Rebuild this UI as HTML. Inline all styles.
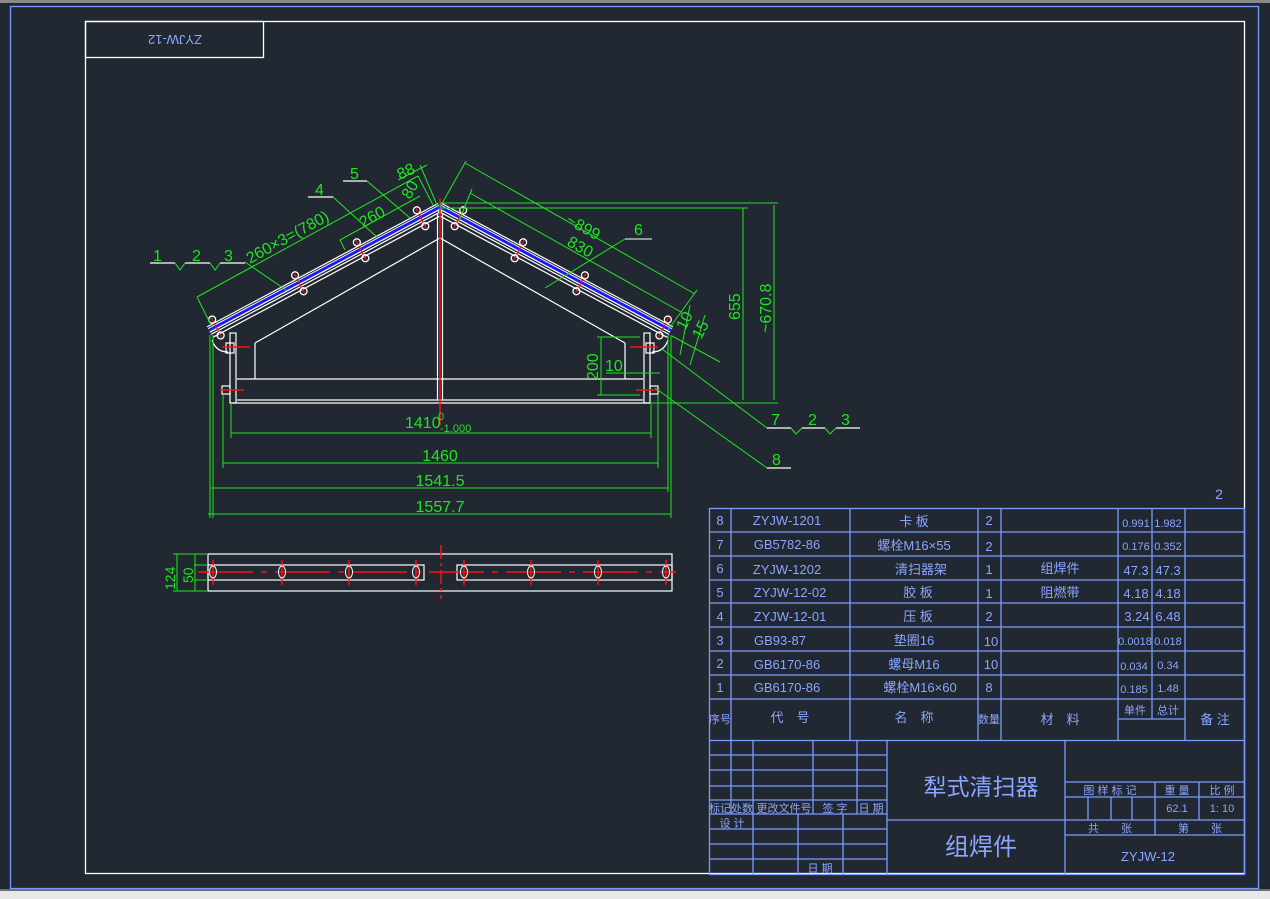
<!DOCTYPE html>
<html><head><meta charset="utf-8"><style>
html,body{margin:0;padding:0;background:#222831;width:1270px;height:899px;overflow:hidden}
svg{display:block}
text{font-family:"Liberation Sans","Noto Sans CJK SC",sans-serif}
.g{stroke:#1ee61e;fill:none;stroke-width:1}
.gt{fill:#1ee61e;font-size:16px}
.w{stroke:#fff;fill:none;stroke-width:1.2}
.r{stroke:#ff1010;stroke-width:1.5}
.b{stroke:#7b9bff;fill:none;stroke-width:1.3}
.bt{fill:#8aa6ff;font-size:13px;text-anchor:middle}
.bc{fill:#8aa6ff;font-size:13px;text-anchor:middle}
</style></head><body>
<svg width="1270" height="899" viewBox="0 0 1270 899" xmlns="http://www.w3.org/2000/svg">
<rect x="0" y="0" width="1270" height="3" fill="#8a8a8a"/>
<rect x="0" y="891" width="1270" height="8" fill="#e8e8e8"/>
<rect x="0" y="889" width="1270" height="2" fill="#6b6f76"/>
<rect x="10.5" y="6.5" width="1248" height="882" fill="none" stroke="#7b9bff" stroke-width="1.3"/>
<rect x="85.5" y="21.5" width="1159" height="852" fill="none" stroke="#fff" stroke-width="1.3"/>
<rect x="85.5" y="21.5" width="178" height="36" fill="none" stroke="#fff" stroke-width="1.3"/>
<text x="175" y="45" class="bc" transform="rotate(180 175 40)" style="font-size:13px">ZYJW-12</text>

<!-- left roof -->
<g id="roof" transform="translate(440,207) rotate(151.9)">
<line x1="0" y1="4" x2="262" y2="4" class="w"/>
<line x1="0" y1="1.8" x2="262" y2="1.8" class="w" stroke-width="0.8"/>
<line x1="0" y1="0" x2="262" y2="0" stroke="#1a1aff" stroke-width="3"/>
<line x1="0" y1="-2" x2="262" y2="-2" class="w" stroke-width="0.8"/>
<line x1="0" y1="-4.5" x2="262" y2="-4.5" class="w"/>
<line x1="4" y1="-8" x2="262" y2="-8" class="w"/>
<g stroke="#ff1010" stroke-width="1.2">
<line x1="22" y1="10" x2="22" y2="-12"/><line x1="90" y1="10" x2="90" y2="-12"/>
<line x1="160" y1="10" x2="160" y2="-12"/><line x1="254" y1="10" x2="254" y2="-12"/>
</g>
<g fill="none" stroke="#fff" stroke-width="1.3">
<circle cx="22" cy="8" r="3.5"/><circle cx="22" cy="-10" r="3.5"/>
<circle cx="90" cy="8" r="3.5"/><circle cx="90" cy="-10" r="3.5"/>
<circle cx="160" cy="8" r="3.5"/><circle cx="160" cy="-10" r="3.5"/>
<circle cx="254" cy="8" r="3.5"/><circle cx="254" cy="-10" r="3.5"/>
</g>
</g>
<use href="#roof" transform="translate(880,0) scale(-1,1)"/>

<!-- frame -->
<g class="w">
<polyline points="255,343 440,238 625,343"/>
<line x1="437.5" y1="213" x2="437.5" y2="400"/>
<line x1="442.5" y1="213" x2="442.5" y2="400"/>
<line x1="255" y1="343" x2="255" y2="379"/><line x1="625" y1="343" x2="625" y2="379"/>
<line x1="237" y1="379" x2="643" y2="379"/>
<line x1="237" y1="400" x2="643" y2="400"/>
<line x1="230" y1="403" x2="650" y2="403"/>
<rect x="230" y="333" width="6" height="70"/>
<rect x="644" y="333" width="6" height="70"/>
<rect x="226" y="343" width="8" height="10"/><rect x="646" y="343" width="8" height="10"/>
<rect x="222" y="386" width="8" height="8"/><rect x="650" y="386" width="8" height="8"/>
<path d="M212,340 Q216,352 228,352"/><path d="M668,340 Q664,352 652,352"/>
</g>
<g class="r">
<line x1="440" y1="198" x2="440" y2="425"/>
<line x1="222" y1="347" x2="250" y2="347"/><line x1="630" y1="347" x2="658" y2="347"/>
<line x1="220" y1="390" x2="244" y2="390"/><line x1="636" y1="390" x2="660" y2="390"/>
</g>

<!-- bottom dims -->
<g class="g">
<line x1="210" y1="335" x2="210" y2="518"/><line x1="213" y1="335" x2="213" y2="518"/>
<line x1="223" y1="395" x2="223" y2="468"/><line x1="231" y1="403" x2="231" y2="438"/>
<line x1="651" y1="403" x2="651" y2="438"/><line x1="658" y1="395" x2="658" y2="468"/>
<line x1="668" y1="335" x2="668" y2="492"/><line x1="671" y1="335" x2="671" y2="518"/>
<line x1="231" y1="433" x2="651" y2="433"/>
<line x1="223" y1="463" x2="658" y2="463"/>
<line x1="210" y1="488" x2="668" y2="488"/>
<line x1="208" y1="514" x2="671" y2="514"/>
</g>
<text x="405" y="428" class="gt">1410</text><text x="438" y="420" class="gt" style="font-size:11px">0</text><text x="440" y="432" class="gt" style="font-size:11px">-1.000</text>
<text x="440" y="461" class="gt" text-anchor="middle">1460</text>
<text x="440" y="486" class="gt" text-anchor="middle">1541.5</text>
<text x="440" y="512" class="gt" text-anchor="middle">1557.7</text>

<!-- right dims -->
<g class="g">
<line x1="440" y1="203" x2="778" y2="203"/>
<line x1="440" y1="208" x2="748" y2="208"/>
<line x1="650" y1="403" x2="778" y2="403"/>
<line x1="743" y1="208" x2="743" y2="400"/>
<line x1="774" y1="205" x2="774" y2="400"/>
<line x1="597" y1="337" x2="640" y2="337"/><line x1="597" y1="395" x2="640" y2="395"/>
<line x1="601" y1="337" x2="601" y2="395"/>
<line x1="606" y1="373" x2="660" y2="373"/>
<line x1="440" y1="207" x2="466" y2="161"/>
<line x1="465" y1="163" x2="695" y2="294"/>
<line x1="668" y1="330" x2="697" y2="290"/>
<line x1="470" y1="193" x2="681" y2="312"/>
<line x1="459" y1="221" x2="472" y2="189"/>
<line x1="672" y1="336" x2="720" y2="362"/>
<line x1="690" y1="305" x2="680" y2="355"/>
<line x1="705" y1="315" x2="690" y2="365"/>
<line x1="545" y1="288" x2="625" y2="239"/><line x1="625" y1="239" x2="652" y2="239" stroke="#fff"/>
<line x1="662" y1="349" x2="767" y2="428"/>
<line x1="655" y1="388" x2="767" y2="468"/>
</g>
<text class="gt" transform="translate(740,320) rotate(-90)">655</text>
<text class="gt" transform="translate(771,333) rotate(-90)">~670.8</text>
<text class="gt" transform="translate(598,380) rotate(-90)">200</text>
<text x="605" y="371" class="gt">10</text>
<text class="gt" transform="translate(565,223) rotate(29)">~899</text>
<text class="gt" transform="translate(566,245) rotate(29)">830</text>
<text class="gt" transform="translate(685,331) rotate(-62)">10</text>
<text class="gt" transform="translate(701,340) rotate(-62)">15</text>
<text x="634" y="235" class="gt">6</text>
<g class="w"><line x1="767" y1="428" x2="791" y2="428"/><line x1="802" y1="428" x2="825" y2="428"/><line x1="836" y1="428" x2="860" y2="428"/><line x1="767" y1="468" x2="791" y2="468"/></g>
<polyline points="791,428 796,434 802,428" class="g"/><polyline points="825,428 830,434 836,428" class="g"/>
<text x="771" y="425" class="gt">7</text><text x="808" y="425" class="gt">2</text><text x="841" y="425" class="gt">3</text>
<text x="772" y="465" class="gt">8</text>

<!-- left dims -->
<g class="g">
<line x1="197" y1="297" x2="418" y2="176"/>
<line x1="197" y1="297" x2="212" y2="327"/>
<line x1="340" y1="240" x2="420" y2="196"/>
<line x1="340" y1="240" x2="345" y2="250"/>
<line x1="398" y1="180" x2="427" y2="165"/>
<line x1="418" y1="176" x2="433" y2="205"/>
<line x1="420" y1="165" x2="437" y2="205"/>
<line x1="245" y1="262" x2="286" y2="290"/>
<line x1="333" y1="197" x2="378" y2="238"/>
<line x1="367" y1="181" x2="410" y2="218"/>
</g>
<text class="gt" transform="translate(250,264) rotate(-29)">260×3=(780)</text>
<text class="gt" transform="translate(363,228) rotate(-29)">260</text>
<text class="gt" transform="translate(410,200) rotate(-60)">80</text>
<text class="gt" transform="translate(400,180) rotate(-25)">88</text>
<g class="w"><line x1="150" y1="263" x2="175" y2="263"/><line x1="185" y1="263" x2="210" y2="263"/><line x1="220" y1="263" x2="245" y2="263"/><line x1="308" y1="197" x2="333" y2="197"/><line x1="343" y1="181" x2="367" y2="181"/></g>
<polyline points="175,263 180,270 185,263" class="g"/><polyline points="210,263 215,270 220,263" class="g"/>
<text x="153" y="261" class="gt">1</text><text x="192" y="261" class="gt">2</text><text x="224" y="261" class="gt">3</text>
<text x="315" y="195" class="gt">4</text><text x="350" y="179" class="gt">5</text>

<!-- bottom view -->
<g class="w">
<rect x="208" y="554" width="464" height="37"/>
<rect x="208" y="565" width="216" height="15"/>
<rect x="457" y="565" width="215" height="15"/>
</g>
<line x1="198" y1="572" x2="676" y2="572" class="r" stroke-dasharray="55,8,6,8"/>
<line x1="441" y1="545" x2="441" y2="599" class="r" stroke-dasharray="14,4,3,4"/>
<g class="r" stroke-width="1"><line x1="213" y1="560" x2="213" y2="585"/><line x1="282" y1="560" x2="282" y2="585"/><line x1="349" y1="560" x2="349" y2="585"/><line x1="416" y1="560" x2="416" y2="585"/><line x1="464" y1="560" x2="464" y2="585"/><line x1="531" y1="560" x2="531" y2="585"/><line x1="598" y1="560" x2="598" y2="585"/><line x1="666" y1="560" x2="666" y2="585"/></g>
<g fill="none" stroke="#fff" stroke-width="1">
<ellipse cx="213" cy="572" rx="3.5" ry="6"/><ellipse cx="282" cy="572" rx="3.5" ry="6"/>
<ellipse cx="349" cy="572" rx="3.5" ry="6"/><ellipse cx="416" cy="572" rx="3.5" ry="6"/>
<ellipse cx="464" cy="572" rx="3.5" ry="6"/><ellipse cx="531" cy="572" rx="3.5" ry="6"/>
<ellipse cx="598" cy="572" rx="3.5" ry="6"/><ellipse cx="666" cy="572" rx="3.5" ry="6"/>
</g>
<g class="g"><line x1="173" y1="554" x2="208" y2="554"/><line x1="173" y1="591" x2="208" y2="591"/><line x1="194" y1="565" x2="208" y2="565"/><line x1="194" y1="580" x2="208" y2="580"/><line x1="177" y1="554" x2="177" y2="591"/><line x1="195" y1="554" x2="195" y2="591"/></g>
<text class="gt" transform="translate(175,590) rotate(-90)" style="font-size:14px">124</text>
<text class="gt" transform="translate(193,583) rotate(-90)" style="font-size:14px">50</text>

<text x="1219" y="499" class="bc" style="font-size:14px">2</text>

<!-- parts table -->
<g class="b">
<rect x="709.5" y="508.5" width="535" height="366"/>
<line x1="709" y1="532" x2="1245" y2="532"/><line x1="709" y1="556" x2="1245" y2="556"/>
<line x1="709" y1="580" x2="1245" y2="580"/><line x1="709" y1="603" x2="1245" y2="603"/>
<line x1="709" y1="627" x2="1245" y2="627"/><line x1="709" y1="651" x2="1245" y2="651"/>
<line x1="709" y1="675" x2="1245" y2="675"/><line x1="709" y1="699" x2="1245" y2="699"/>
<line x1="709" y1="740.5" x2="1245" y2="740.5"/>
<line x1="1118" y1="719" x2="1185" y2="719"/>
<line x1="731" y1="508" x2="731" y2="740"/><line x1="850" y1="508" x2="850" y2="740"/>
<line x1="978" y1="508" x2="978" y2="740"/><line x1="1001" y1="508" x2="1001" y2="740"/>
<line x1="1118" y1="508" x2="1118" y2="740"/><line x1="1152" y1="508" x2="1152" y2="719"/>
<line x1="1185" y1="508" x2="1185" y2="740"/>
<line x1="709" y1="755" x2="887" y2="755"/><line x1="709" y1="770" x2="887" y2="770"/>
<line x1="709" y1="786" x2="887" y2="786"/><line x1="709" y1="800" x2="887" y2="800"/>
<line x1="709" y1="814" x2="887" y2="814"/><line x1="709" y1="829" x2="887" y2="829"/>
<line x1="709" y1="844" x2="887" y2="844"/><line x1="709" y1="859" x2="887" y2="859"/>
<line x1="731" y1="740" x2="731" y2="814"/><line x1="753" y1="740" x2="753" y2="874"/>
<line x1="813" y1="740" x2="813" y2="814"/><line x1="857" y1="740" x2="857" y2="814"/>
<line x1="798" y1="814" x2="798" y2="874"/><line x1="843" y1="814" x2="843" y2="874"/>
<line x1="887" y1="740" x2="887" y2="874"/>
<line x1="887" y1="820" x2="1245" y2="820"/>
<line x1="1065" y1="740" x2="1065" y2="874"/>
<line x1="1065" y1="782" x2="1245" y2="782"/><line x1="1065" y1="797" x2="1245" y2="797"/>
<line x1="1065" y1="835" x2="1245" y2="835"/>
<line x1="1155" y1="782" x2="1155" y2="835"/><line x1="1199" y1="782" x2="1199" y2="820"/>
<line x1="1088" y1="797" x2="1088" y2="820"/><line x1="1111" y1="797" x2="1111" y2="820"/><line x1="1132" y1="797" x2="1132" y2="820"/>
</g>
<g class="bt">
<text x="720" y="525">8</text><text x="787" y="525">ZYJW-1201</text><text x="914" y="526">卡 板</text><text x="989" y="525">2</text><text x="1136" y="527" style="font-size:11px">0.991</text><text x="1168" y="527" style="font-size:11px">1.982</text>
<text x="720" y="549">7</text><text x="787" y="549">GB5782-86</text><text x="914" y="550">螺栓M16×55</text><text x="989" y="551">2</text><text x="1136" y="550" style="font-size:11px">0.176</text><text x="1168" y="550" style="font-size:11px">0.352</text>
<text x="720" y="573">6</text><text x="787" y="574">ZYJW-1202</text><text x="921" y="574">清扫器架</text><text x="989" y="574">1</text><text x="1060" y="573">组焊件</text><text x="1136" y="575">47.3</text><text x="1168" y="575">47.3</text>
<text x="720" y="597">5</text><text x="790" y="597">ZYJW-12-02</text><text x="918" y="597">胶 板</text><text x="989" y="598">1</text><text x="1060" y="597">阻燃带</text><text x="1136" y="598">4.18</text><text x="1168" y="598">4.18</text>
<text x="720" y="621">4</text><text x="790" y="621">ZYJW-12-01</text><text x="918" y="621">压 板</text><text x="989" y="621">2</text><text x="1137" y="621">3.24</text><text x="1168" y="621">6.48</text>
<text x="720" y="645">3</text><text x="780" y="645">GB93-87</text><text x="914" y="645">垫圈16</text><text x="991" y="646">10</text><text x="1135" y="645" style="font-size:11px">0.0018</text><text x="1168" y="645" style="font-size:11px">0.018</text>
<text x="720" y="668">2</text><text x="787" y="669">GB6170-86</text><text x="914" y="669">螺母M16</text><text x="991" y="669">10</text><text x="1134" y="670" style="font-size:11px">0.034</text><text x="1168" y="669" style="font-size:11px">0.34</text>
<text x="720" y="692">1</text><text x="787" y="692">GB6170-86</text><text x="920" y="692">螺栓M16×60</text><text x="989" y="692">8</text><text x="1134" y="693" style="font-size:11px">0.185</text><text x="1168" y="692" style="font-size:11px">1.48</text>
<text x="720" y="723" style="font-size:11px">序号</text><text x="790" y="722">代　号</text><text x="914" y="722">名　称</text><text x="989" y="723" style="font-size:11px">数量</text><text x="1060" y="724">材　料</text><text x="1135" y="714" style="font-size:11px">单件</text><text x="1168" y="714" style="font-size:11px">总计</text><text x="1215" y="724">备 注</text>
<text x="720" y="812" style="font-size:11px">标记</text><text x="742" y="812" style="font-size:11px">处数</text><text x="784" y="812" style="font-size:11px">更改文件号</text><text x="835" y="812" style="font-size:11px">签 字</text><text x="871" y="812" style="font-size:11px">日 期</text>
<text x="732" y="827" style="font-size:11px">设 计</text><text x="820" y="872" style="font-size:11px">日 期</text>
<text x="1110" y="794" style="font-size:11px">图 样 标 记</text><text x="1177" y="794" style="font-size:11px">重 量</text><text x="1222" y="794" style="font-size:11px">比 例</text>
<text x="1177" y="812" style="font-size:11px">62.1</text><text x="1222" y="812" style="font-size:11px">1: 10</text>
<text x="1110" y="832" style="font-size:11px">共　　张</text><text x="1200" y="832" style="font-size:11px">第　　张</text>
<text x="1148" y="861" style="font-size:13px">ZYJW-12</text>
<text x="981" y="795" style="font-size:23px">犁式清扫器</text>
<text x="981" y="855" style="font-size:24px">组焊件</text>
</g>
</svg>
</body></html>
